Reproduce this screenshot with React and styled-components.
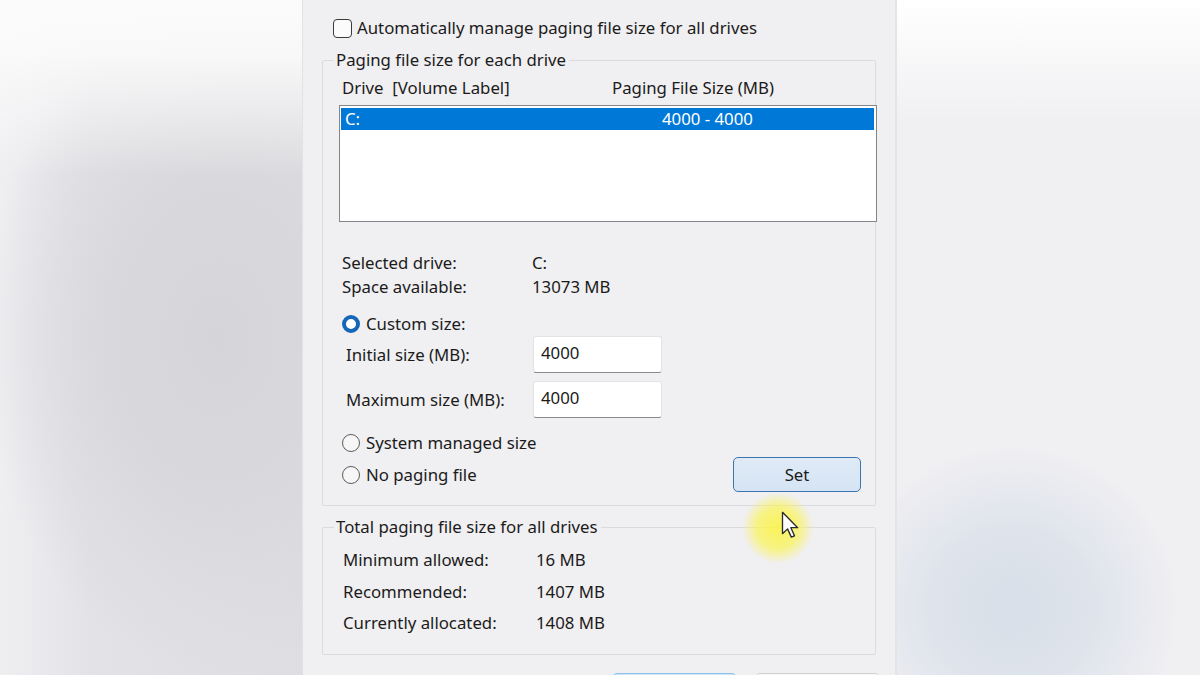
import React from "react";
import styled, { createGlobalStyle } from "styled-components";

const GlobalStyle = createGlobalStyle`
  html, body {
    margin: 0;
    padding: 0;
    overflow: hidden;
    background: #eeedf0;
  }
  * {
    box-sizing: border-box;
  }
`;

const App = () => {
  return (
    <>
      <GlobalStyle />
      <Page>
        <SideLeft />
        <Dialog>
          <CheckRow>
            <CheckBox />
            <span>Automatically manage paging file size for all drives</span>
          </CheckRow>

          <GroupBox>
            <GroupTitle>Paging file size for each drive</GroupTitle>
            <ColumnHeader>
              <span>Drive&nbsp;&nbsp;[Volume Label]</span>
              <span>Paging File Size (MB)</span>
            </ColumnHeader>
            <ListBox>
              <ListRow selected>
                <span>C:</span>
                <span>4000 - 4000</span>
              </ListRow>
            </ListBox>

            <InfoGrid>
              <span>Selected drive:</span>
              <span>C:</span>
              <span>Space available:</span>
              <span>13073 MB</span>
            </InfoGrid>

            <RadioRow $top={14}>
              <Radio checked />
              <span>Custom size:</span>
            </RadioRow>
            <SizeRow $top={1}>
              <SizeLabel>Initial size (MB):</SizeLabel>
              <SizeInput defaultValue="4000" />
            </SizeRow>
            <SizeRow $top={8}>
              <SizeLabel>Maximum size (MB):</SizeLabel>
              <SizeInput defaultValue="4000" />
            </SizeRow>
            <RadioRow $top={14}>
              <Radio />
              <span>System managed size</span>
            </RadioRow>
            <ActionRow>
              <RadioRow $top={0}>
                <Radio />
                <span>No paging file</span>
              </RadioRow>
              <SetButton>Set</SetButton>
            </ActionRow>
          </GroupBox>

          <GroupBox $top={21} $bottom={15}>
            <GroupTitle>Total paging file size for all drives</GroupTitle>
            <TotalsGrid>
              <span>Minimum allowed:</span>
              <span>16 MB</span>
              <span>Recommended:</span>
              <span>1407 MB</span>
              <span>Currently allocated:</span>
              <span>1408 MB</span>
            </TotalsGrid>
          </GroupBox>

          {/* OK / Cancel sit below the fold; only their top edges show */}
          <ButtonRow>
            <DialogButton primary aria-label="OK" />
            <DialogButton aria-label="Cancel" />
          </ButtonRow>
        </Dialog>
        <SideRight />

        <Halo />
        <Cursor viewBox="0 0 14 21" width="19" height="28">
          <path
            d="M1 1 L1 17 L4.8 13.4 L7.6 19.6 L10 18.6 L7.3 12.5 L12.4 12.5 Z"
            fill="#fff"
            stroke="#2a2a2a"
            strokeWidth="1"
            strokeLinejoin="round"
          />
        </Cursor>
      </Page>
    </>
  );
};

const Page = styled.div`
  position: relative;
  display: flex;
  width: 1200px;
  height: 675px;
  overflow: hidden;
  font-family: "Noto Sans", "Open Sans", sans-serif;
  font-size: 16.8px;
  color: #1b1b1b;
`;

const SideLeft = styled.div`
  flex: 1;
  background:
    linear-gradient(180deg, #fbfbfb 0%, rgba(251, 251, 251, 0.9) 8%, rgba(251, 251, 251, 0) 26%),
    radial-gradient(ellipse 78% 50% at 72% 50%, #d5d4d8 0%, #d9d8dc 45%, rgba(228, 227, 230, 0) 100%),
    linear-gradient(90deg, #efeef1 0%, #e3e2e6 30%, #dedde1 100%);
`;

const SideRight = styled.div`
  flex: 1;
  border-left: 2px solid #e4e3e6;
  background:
    radial-gradient(ellipse 55% 24% at 38% 90%, #d7dfe8 0%, #dfe4ec 50%, rgba(238, 237, 241, 0) 100%),
    linear-gradient(180deg, #ffffff 0%, #f9f9fa 7%, #f0eff2 18%, #f0eff2 100%);
`;

const Dialog = styled.div`
  width: 592px;
  flex: none;
  display: flex;
  flex-direction: column;
  background: #f0eff1;
  padding: 17px 19px 0 19px;
  box-shadow: -1px 0 0 #e2e1e4;
`;

const CheckRow = styled.label`
  display: flex;
  align-items: center;
  gap: 5px;
  height: 22px;
  line-height: 22px;
  margin-left: 11px;
`;

const CheckBox = styled.span`
  width: 19px;
  height: 19px;
  border: 1.5px solid #3a3a3a;
  border-radius: 4px;
  background: #fbfbfb;
  flex: none;
`;

const GroupBox = styled.div`
  display: flex;
  flex-direction: column;
  margin-top: ${(p) => p.$top ?? 21}px;
  padding-bottom: ${(p) => p.$bottom ?? 13}px;
  border: 1px solid #dbdadd;
  border-radius: 2px;
`;

const GroupTitle = styled.div`
  align-self: flex-start;
  margin: -12px 0 0 11px;
  padding: 0 3px 0 2px;
  line-height: 22px;
  background: #f0eff1;
`;

const ColumnHeader = styled.div`
  display: grid;
  grid-template-columns: 270px auto;
  margin: 6px 0 0 19px;
  line-height: 22px;
`;

const ListBox = styled.div`
  width: 538px;
  height: 117px;
  margin: 6px 0 0 16px;
  padding: 2px 2px 0 1px;
  background: #ffffff;
  border: 1px solid #85868a;
`;

const ListRow = styled.div`
  display: grid;
  grid-template-columns: 317px auto;
  height: 22px;
  line-height: 22px;
  padding-left: 4px;
  background: ${(p) => (p.selected ? "#0078d7" : "transparent")};
  color: ${(p) => (p.selected ? "#ffffff" : "#1b1b1b")};
`;

const InfoGrid = styled.div`
  display: grid;
  grid-template-columns: 190px auto;
  line-height: 24px;
  margin: 29px 0 0 19px;
`;

const RadioRow = styled.div`
  display: flex;
  align-items: center;
  gap: 6px;
  height: 22px;
  line-height: 22px;
  margin: ${(p) => p.$top}px 0 0 ${(p) => (p.$top === 0 ? 0 : 19)}px;
`;

const Radio = styled.span`
  width: 18px;
  height: 18px;
  flex: none;
  border-radius: 50%;
  border: ${(p) => (p.checked ? "4px solid #1767b8" : "1.5px solid #5c5c5c")};
  background: ${(p) => (p.checked ? "#ffffff" : "#f6f6f7")};
`;

const SizeRow = styled.div`
  display: grid;
  grid-template-columns: 187px 129px;
  align-items: center;
  margin: ${(p) => p.$top}px 0 0 23px;
`;

const SizeLabel = styled.span`
  line-height: 22px;
`;

const SizeInput = styled.input`
  width: 129px;
  height: 37px;
  border: 1px solid #e3e3e5;
  border-bottom: 1.5px solid #8a8a8c;
  border-radius: 3px;
  background: #ffffff;
  font: inherit;
  color: #1b1b1b;
  padding: 0 0 5px 7px;
  outline: none;
`;

const ActionRow = styled.div`
  display: flex;
  align-items: center;
  justify-content: space-between;
  margin: 3px 14px 0 19px;
`;

const SetButton = styled.button`
  width: 128px;
  height: 35px;
  border: 1.5px solid #3d76ae;
  border-radius: 5px;
  background: linear-gradient(180deg, #dfeaf6 0%, #d5e4f4 100%);
  font: inherit;
  color: #1b1b1b;
  padding: 0;
`;

const TotalsGrid = styled.div`
  display: grid;
  grid-template-columns: 193px auto;
  line-height: 31.5px;
  margin: 6px 0 0 20px;
`;

const ButtonRow = styled.div`
  display: flex;
  justify-content: flex-end;
  gap: 18px;
  margin: 18px -4px 0 0;
`;

const DialogButton = styled.button`
  width: 125px;
  height: 35px;
  border-radius: 5px;
  border: 1.5px solid ${(p) => (p.primary ? "#8cc4ee" : "#d2d2d4")};
  background: ${(p) => (p.primary ? "#cfe5f7" : "#f7f7f8")};
`;

const Halo = styled.div`
  position: absolute;
  left: 743px;
  top: 493px;
  width: 70px;
  height: 70px;
  border-radius: 50%;
  background: radial-gradient(circle, rgba(250, 244, 70, 0.9) 0%, rgba(250, 244, 90, 0.72) 42%, rgba(250, 245, 120, 0) 72%);
  pointer-events: none;
`;

const Cursor = styled.svg`
  position: absolute;
  left: 781px;
  top: 511px;
  pointer-events: none;
`;

export default App;
